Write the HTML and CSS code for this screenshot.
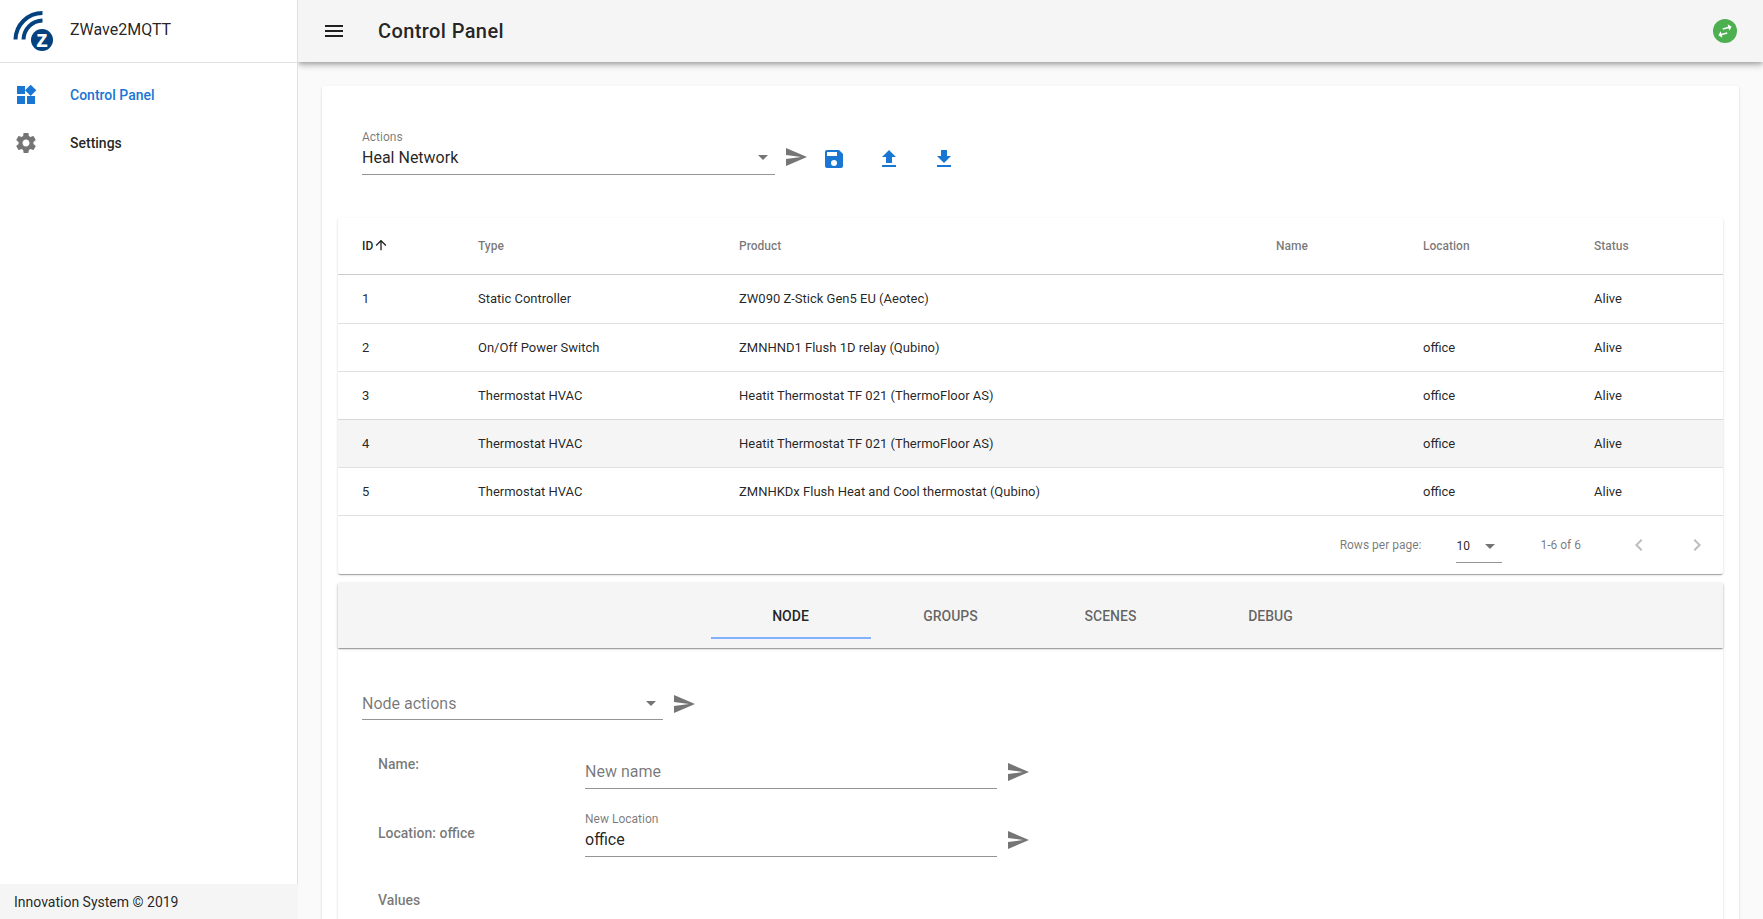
FILE: index.html
```html
<!DOCTYPE html>
<html lang="en">
<head>
<meta charset="utf-8">
<title>ZWave2MQTT</title>
<link rel="stylesheet" href="styles.css">
</head>
<body>
<div class="app">
  <aside class="sidebar">
    <div class="brand">
      <svg class="logo" viewBox="0 0 60 60" width="60" height="60">
        <path class="arc" d="M15.5 38.5A27 27 0 0 1 42.5 12"/>
        <path class="arc" d="M23.5 38.5A19.5 19.5 0 0 1 42.5 19.5"/>
        <circle class="disc" cx="42" cy="39" r="11"/>
        <text class="logo-z" x="42" y="46" text-anchor="middle">z</text>
      </svg>
      <span class="brand-name">ZWave2MQTT</span>
    </div>
    <nav class="nav">
      <a class="nav-item active">
        <svg class="icon nav-icon" viewBox="0 0 24 24"><path d="M13 13v8h8v-8h-8zM3 21h8v-8H3v8zM3 3v8h8V3H3zm13.66-1.31L11 7.34 16.66 13l5.66-5.66-5.66-5.65z"/></svg>
        <span>Control Panel</span>
      </a>
      <a class="nav-item">
        <svg class="icon nav-icon" viewBox="0 0 24 24"><path d="M19.43 12.98c.04-.32.07-.64.07-.98s-.03-.66-.07-.98l2.11-1.65c.19-.15.24-.42.12-.64l-2-3.46c-.12-.22-.39-.3-.61-.22l-2.49 1c-.52-.4-1.08-.73-1.69-.98l-.38-2.65C14.46 2.18 14.25 2 14 2h-4c-.25 0-.46.18-.49.42l-.38 2.65c-.61.25-1.17.59-1.69.98l-2.49-1c-.23-.09-.49 0-.61.22l-2 3.46c-.13.22-.07.49.12.64l2.11 1.65c-.04.32-.07.65-.07.98s.03.66.07.98l-2.11 1.65c-.19.15-.24.42-.12.64l2 3.46c.12.22.39.3.61.22l2.49-1c.52.4 1.08.73 1.69.98l.38 2.65c.03.24.24.42.49.42h4c.25 0 .46-.18.49-.42l.38-2.65c.61-.25 1.17-.59 1.69-.98l2.49 1c.23.09.49 0 .61-.22l2-3.46c.12-.22.07-.49-.12-.64l-2.11-1.65zM12 15.5c-1.93 0-3.5-1.57-3.5-3.5s1.57-3.5 3.5-3.5 3.5 1.57 3.5 3.5-1.57 3.5-3.5 3.5z"/></svg>
        <span>Settings</span>
      </a>
    </nav>
    <footer class="side-footer">Innovation System © 2019</footer>
  </aside>

  <div class="main">
    <header class="topbar">
      <svg class="icon menu-icon" viewBox="0 0 24 24"><path d="M3 18h18v-2H3v2zm0-5h18v-2H3v2zm0-7v2h18V6H3z"/></svg>
      <h1 class="title">Control Panel</h1>
      <span class="status-dot">
        <svg viewBox="0 0 24 24"><path d="M6.99 11L3 15l3.99 4v-3H14v-2H6.99v-3zM21 9l-3.99-4v3H10v2h7.01v3L21 9z"/></svg>
      </span>
    </header>

    <main class="content">
      <section class="card">
        <div class="actions">
          <div class="field field-actions">
            <label class="float-label">Actions</label>
            <div class="control">
              <span class="value">Heal Network</span>
              <span class="caret"></span>
            </div>
          </div>
          <svg class="icon send send-main" viewBox="0 0 24 24"><path d="M2 21l21-9L2 3v7l15 2-15 2z"/></svg>
          <svg class="icon tool" viewBox="0 0 24 24"><path d="M15 9H5V5h10M12 19a3 3 0 1 1 0-6 3 3 0 0 1 0 6M17 3H5a2 2 0 0 0-2 2v14a2 2 0 0 0 2 2h14a2 2 0 0 0 2-2V7l-4-4z"/></svg>
          <svg class="icon tool" viewBox="0 0 24 24"><path d="M9 16h6v-6h4l-7-7-7 7h4v6zm-4 2h14v2H5v-2z"/></svg>
          <svg class="icon tool" viewBox="0 0 24 24"><path d="M19 9h-4V3H9v6H5l7 7 7-7zM5 18v2h14v-2H5z"/></svg>
        </div>

        <div class="table-wrap">
          <table class="nodes">
            <colgroup>
              <col class="c-id"><col class="c-type"><col class="c-product"><col class="c-name"><col class="c-location"><col class="c-status">
            </colgroup>
            <thead>
              <tr>
                <th class="sorted"><span class="sort-head">ID<svg class="sort-arrow" viewBox="0 0 24 24"><path d="M4 12l1.41 1.41L11 7.83V20h2V7.83l5.58 5.59L20 12l-8-8-8 8z"/></svg></span></th>
                <th>Type</th><th>Product</th><th>Name</th><th>Location</th><th>Status</th>
              </tr>
            </thead>
            <tbody>
              <tr class="first"><td>1</td><td>Static Controller</td><td>ZW090 Z-Stick Gen5 EU (Aeotec)</td><td></td><td></td><td>Alive</td></tr>
              <tr><td>2</td><td>On/Off Power Switch</td><td>ZMNHND1 Flush 1D relay (Qubino)</td><td></td><td>office</td><td>Alive</td></tr>
              <tr><td>3</td><td>Thermostat HVAC</td><td>Heatit Thermostat TF 021 (ThermoFloor AS)</td><td></td><td>office</td><td>Alive</td></tr>
              <tr class="selected"><td>4</td><td>Thermostat HVAC</td><td>Heatit Thermostat TF 021 (ThermoFloor AS)</td><td></td><td>office</td><td>Alive</td></tr>
              <tr><td>5</td><td>Thermostat HVAC</td><td>ZMNHKDx Flush Heat and Cool thermostat (Qubino)</td><td></td><td>office</td><td>Alive</td></tr>
            </tbody>
          </table>
          <div class="pager">
            <span class="pager-label">Rows per page:</span>
            <div class="pager-select"><span>10</span><span class="caret"></span></div>
            <span class="pager-range">1-6 of 6</span>
            <svg class="pager-btn" viewBox="0 0 24 24"><path d="M15.41 7.41L14 6l-6 6 6 6 1.41-1.41L10.83 12z"/></svg>
            <svg class="pager-btn" viewBox="0 0 24 24"><path d="M10 6L8.59 7.41 13.17 12l-4.58 4.59L10 18l6-6z"/></svg>
          </div>
        </div>

        <div class="tabs-panel">
          <div class="tabs">
            <a class="tab active">Node</a>
            <a class="tab">Groups</a>
            <a class="tab">Scenes</a>
            <a class="tab">Debug</a>
          </div>
          <div class="tab-body">
            <div class="node-actions">
              <div class="field field-node">
                <div class="control">
                  <span class="value placeholder">Node actions</span>
                  <span class="caret"></span>
                </div>
              </div>
              <svg class="icon send" viewBox="0 0 24 24"><path d="M2 21l21-9L2 3v7l15 2-15 2z"/></svg>
            </div>
            <div class="form-row">
              <span class="form-label label-name">Name:</span>
              <div class="field field-form">
                <div class="control"><span class="value placeholder">New name</span></div>
              </div>
              <svg class="icon send" viewBox="0 0 24 24"><path d="M2 21l21-9L2 3v7l15 2-15 2z"/></svg>
            </div>
            <div class="form-row">
              <span class="form-label label-location">Location: office</span>
              <div class="field field-form">
                <label class="float-label">New Location</label>
                <div class="control"><span class="value">office</span></div>
              </div>
              <svg class="icon send" viewBox="0 0 24 24"><path d="M2 21l21-9L2 3v7l15 2-15 2z"/></svg>
            </div>
            <div class="values-label">Values</div>
          </div>
        </div>
      </section>
    </main>
  </div>
</div>
</body>
</html>
```

FILE: styles.css
```css
* { box-sizing: border-box; }
html, body { margin: 0; height: 100%; overflow: hidden; }
body {
  font-family: Roboto, "Liberation Sans", sans-serif;
  color: rgba(0, 0, 0, .87);
  background: #fafafa;
}
.app { display: flex; height: 919px; }

.icon { width: 24px; height: 24px; flex: none; display: block; }

/* sidebar */
.sidebar {
  width: 298px;
  flex: none;
  background: #fff;
  border-right: 1px solid rgba(0, 0, 0, .12);
  display: flex;
  flex-direction: column;
}
.brand {
  height: 63px;
  flex: none;
  border-bottom: 1px solid rgba(0, 0, 0, .12);
  display: flex;
  align-items: center;
}
.logo { flex: none; margin-right: 10px; display: block; }
.arc { fill: none; stroke: #03427f; stroke-width: 4; }
.disc { fill: #03427f; }
.logo-z { fill: #fff; font-family: "Liberation Sans", sans-serif; font-weight: 700; font-size: 24px; }
.brand-name { font-size: 16px; line-height: 24px; margin-top: -3px; }
.nav { padding-top: 8px; flex: 1; }
.nav-item {
  height: 48px;
  display: flex;
  align-items: center;
  padding-left: 14px;
  font-size: 14px;
  font-weight: 500;
}
.nav-icon { fill: rgba(0, 0, 0, .54); margin-right: 32px; }
.nav-item.active { color: #1976d2; }
.nav-item.active .nav-icon { fill: #1976d2; }
.side-footer {
  height: 35px;
  flex: none;
  margin-right: -1px;
  background: #f5f5f5;
  font-size: 14px;
  line-height: 37px;
  padding-left: 14px;
}

/* top bar */
.main { flex: 1; min-width: 0; display: flex; flex-direction: column; }
.topbar {
  height: 62px;
  flex: none;
  background: #f5f5f5;
  display: flex;
  align-items: center;
  padding: 0 24px 0 24px;
  position: relative;
  z-index: 2;
  clip-path: inset(0 0 -20px 0);
  box-shadow: 0 2px 4px -1px rgba(0, 0, 0, .2), 0 4px 5px 0 rgba(0, 0, 0, .14), 0 1px 10px 0 rgba(0, 0, 0, .12);
}
.menu-icon { fill: rgba(0, 0, 0, .87); margin-right: 32px; }
.title { font-size: 20px; font-weight: 500; line-height: 1; margin: 0 0 1px; letter-spacing: .02em; flex: 1; }
.status-dot {
  width: 24px;
  height: 24px;
  margin: 0 2px 1px 0;
  border-radius: 50%;
  background: #4caf50;
  display: flex;
  align-items: center;
  justify-content: center;
}
.status-dot svg { width: 20px; height: 20px; fill: #fff; transform: rotate(-14deg); display: block; }

/* content */
.content { flex: 1; min-height: 0; overflow: hidden; padding: 24px 24px 0; }
.card {
  background: #fff;
  border-radius: 2px;
  padding: 0 16px 16px;
  box-shadow: 0 2px 1px -1px rgba(0, 0, 0, .2), 0 1px 1px 0 rgba(0, 0, 0, .14), 0 1px 3px 0 rgba(0, 0, 0, .12);
}
.actions { height: 132px; padding: 44px 0 0 24px; display: flex; align-items: flex-start; }

/* form fields */
.field { flex: none; }
.field-actions { width: 413px; }
.field-node { width: 301px; }
.field-form { width: 412px; }
.float-label { display: block; font-size: 12px; line-height: 14px; color: rgba(0, 0, 0, .54); }
.control {
  height: 32px;
  border-bottom: 1px solid rgba(0, 0, 0, .42);
  display: flex;
  align-items: center;
  padding-bottom: 2px;
}
.actions .control { height: 31px; padding-bottom: 3px; }
.value { font-size: 16px; flex: 1; }
.placeholder { color: rgba(0, 0, 0, .54); }
.caret {
  width: 0;
  height: 0;
  flex: none;
  border-left: 5px solid transparent;
  border-right: 5px solid transparent;
  border-top: 5px solid rgba(0, 0, 0, .54);
}
.control .caret { margin-right: 7px; }
.send { fill: rgba(0, 0, 0, .54); margin-left: 9px; }
.send-main { margin: 15px 0 0 9px; }
.tool { fill: #1976d2; margin: 17px 0 0 31px; }
.send-main + .tool { margin-left: 14px; }

/* table */
.table-wrap {
  box-shadow: 0 2px 1px -1px rgba(0, 0, 0, .2), 0 1px 1px 0 rgba(0, 0, 0, .14), 0 1px 3px 0 rgba(0, 0, 0, .12);
  border-radius: 2px;
}
.nodes { width: 100%; table-layout: fixed; border-collapse: collapse; }
.c-id { width: 116px; }
.c-type { width: 261px; }
.c-product { width: 537px; }
.c-name { width: 147px; }
.c-location { width: 171px; }
.c-status { width: 153px; }
.nodes th {
  height: 56px;
  padding: 0 24px;
  text-align: left;
  font-size: 12px;
  font-weight: 500;
  color: rgba(0, 0, 0, .54);
  border-bottom: 1px solid rgba(0, 0, 0, .2);
}
.nodes th.sorted { color: rgba(0, 0, 0, .87); }
.sort-head { display: inline-flex; align-items: center; }
.sort-arrow { width: 16px; height: 16px; fill: rgba(0, 0, 0, .87); display: block; margin-top: -1px; }
.nodes td {
  height: 48px;
  padding: 0 24px;
  font-size: 13px;
  border-bottom: 1px solid rgba(0, 0, 0, .12);
}
.nodes .first td { height: 49px; }
.selected td { background: #f5f5f5; }
.pager {
  height: 58px;
  display: flex;
  align-items: center;
  justify-content: flex-end;
  font-size: 12px;
  color: rgba(0, 0, 0, .54);
  padding-right: 14px;
}
.pager-select {
  width: 46px;
  height: 32px;
  margin: 0 38px 0 35px;
  border-bottom: 1px solid rgba(0, 0, 0, .42);
  color: rgba(0, 0, 0, .87);
  display: flex;
  align-items: center;
  justify-content: space-between;
  padding-right: 7px;
  position: relative;
  top: 2px;
}
.pager-range { margin-right: 46px; }
.pager-btn { width: 24px; height: 24px; fill: rgba(0, 0, 0, .26); margin-left: 34px; display: block; }
.pager-range + .pager-btn { margin-left: 0; }

/* tabs */
.tabs-panel {
  margin-top: 9px;
  box-shadow: 0 2px 1px -1px rgba(0, 0, 0, .2), 0 1px 1px 0 rgba(0, 0, 0, .14), 0 1px 3px 0 rgba(0, 0, 0, .12);
  border-radius: 2px;
}
.tabs {
  height: 65px;
  background: #f5f5f5;
  display: flex;
  justify-content: center;
  box-shadow: 0 2px 1px -1px rgba(0, 0, 0, .2), 0 1px 1px 0 rgba(0, 0, 0, .14), 0 1px 3px 0 rgba(0, 0, 0, .12);
  position: relative;
}
.tab {
  width: 160px;
  display: flex;
  align-items: center;
  justify-content: center;
  padding-top: 2px;
  font-size: 14px;
  font-weight: 500;
  text-transform: uppercase;
  color: rgba(0, 0, 0, .6);
  position: relative;
}
.tab.active { color: rgba(0, 0, 0, .87); }
.tab.active::after {
  content: "";
  position: absolute;
  left: 0;
  right: 0;
  bottom: 9px;
  height: 2px;
  background: #82b1ff;
}
.tab-body { padding: 0 24px 24px; height: 400px; }
.node-actions { display: flex; align-items: center; padding-top: 40px; height: 72px; }
.node-actions .control { padding-bottom: 0; }
.form-row { display: flex; align-items: flex-end; height: 68px; position: relative; }
.form-row .field { margin-bottom: -1px; }
.form-label {
  width: 223px;
  padding-left: 16px;
  flex: none;
  align-self: flex-start;
  font-size: 14px;
  font-weight: 500;
  color: rgba(0, 0, 0, .54);
}
.label-name { padding-top: 36px; }
.label-location { padding-top: 37px; }
.form-row .send { margin-bottom: 4px; }
.field-form .float-label { margin-bottom: -1px; }
.values-label { font-size: 14px; font-weight: 500; color: rgba(0, 0, 0, .54); padding: 36px 0 0 16px; }
```
